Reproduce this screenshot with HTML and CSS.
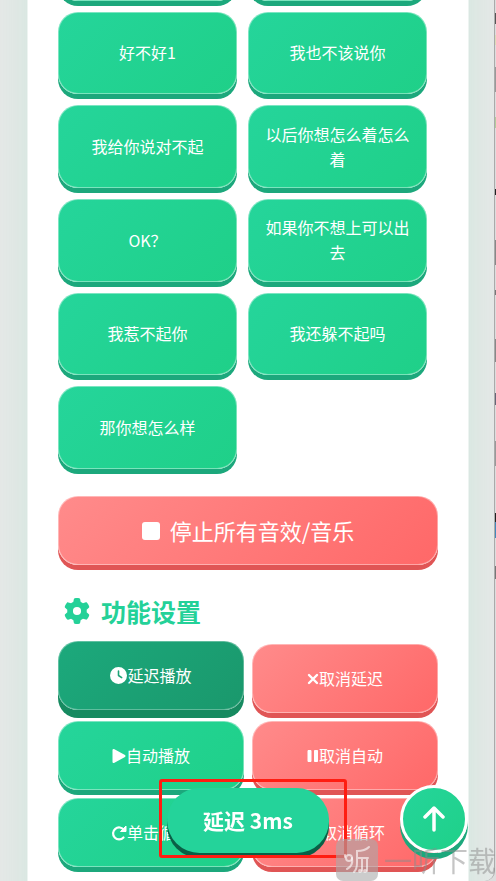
FILE: index.html
```
<!DOCTYPE html>
<html lang="zh-CN">
<head>
	<meta charset="UTF-8">
	<meta name="viewport" content="width=device-width, initial-scale=1.0">
	<title>音效盒</title>
	<link rel="stylesheet" href="styles.css">
</head>
<body>
	<div class="window">
		<main class="card">
			<div class="sound-grid">
				<button class="btn" type="button"></button>
				<button class="btn" type="button"></button>
				<button class="btn" type="button">好不好1</button>
				<button class="btn" type="button">我也不该说你</button>
				<button class="btn" type="button">我给你说对不起</button>
				<button class="btn" type="button">以后你想怎么着怎么着</button>
				<button class="btn" type="button">OK？</button>
				<button class="btn" type="button">如果你不想上可以出去</button>
				<button class="btn" type="button">我惹不起你</button>
				<button class="btn" type="button">我还躲不起吗</button>
				<button class="btn" type="button">那你想怎么样</button>
			</div>

			<button class="btn red stop" type="button">
				<svg width="18" height="18" viewBox="0 0 18 18"><rect width="18" height="18" rx="3" fill="currentColor"/></svg>
				停止所有音效/音乐
			</button>

			<h2 class="title">
				<svg width="26" height="26" viewBox="0 0 512 512"><path fill="currentColor" d="M495.9 166.6c3.2 8.7.5 18.4-6.4 24.6l-43.3 39.4c1.1 8.3 1.7 16.800 1.700 25.400s-.6 17.100-1.700 25.400l43.300 39.400c6.900 6.200 9.600 15.900 6.400 24.600c-4.400 11.900-9.700 23.300-15.800 34.300l-4.700 8.100c-6.600 11-14 21.400-22.100 31.200c-5.900 7.200-15.700 9.600-24.500 6.800l-55.700-17.700c-13.400 10.300-28.200 18.900-44 25.400l-12.500 57.100c-2 9.100-9 16.300-18.200 17.800c-13.800 2.300-28 3.500-42.500 3.500s-28.700-1.200-42.500-3.500c-9.200-1.500-16.200-8.700-18.200-17.800l-12.500-57.100c-15.800-6.500-30.600-15.100-44-25.400L83.100 425.900c-8.800 2.800-18.600.3-24.500-6.800c-8.100-9.800-15.500-20.200-22.100-31.200l-4.700-8.100c-6.100-11-11.400-22.400-15.800-34.300c-3.200-8.700-.5-18.400 6.400-24.600l43.300-39.400C64.600 273.100 64 264.600 64 256s.6-17.100 1.700-25.400L22.400 191.200c-6.900-6.200-9.600-15.900-6.400-24.600c4.400-11.900 9.700-23.300 15.800-34.300l4.700-8.100c6.600-11 14-21.400 22.100-31.200c5.900-7.200 15.700-9.600 24.500-6.800l55.700 17.700c13.400-10.300 28.200-18.900 44-25.400l12.500-57.100c2-9.100 9-16.300 18.200-17.800C227.300 1.200 241.500 0 256 0s28.700 1.200 42.500 3.500c9.200 1.500 16.200 8.700 18.200 17.800l12.500 57.100c15.800 6.500 30.600 15.100 44 25.400l55.700-17.700c8.800-2.800 18.600-.3 24.500 6.800c8.100 9.800 15.500 20.200 22.100 31.200l4.700 8.100c6.100 11 11.400 22.400 15.800 34.300zM256 336a80 80 0 1 0 0-160a80 80 0 1 0 0 160z"/></svg>
				功能设置
			</h2>

			<div class="set-grid">
				<button class="btn active" type="button">
					<svg width="17" height="17" viewBox="0 0 512 512"><path fill="currentColor" d="M256 0a256 256 0 1 1 0 512A256 256 0 1 1 256 0zM232 120V256c0 8 4 15.500 10.700 20l96 64c11 7.400 25.900 4.400 33.300-6.700s4.400-25.900-6.700-33.300L280 243.200V120c0-13.300-10.700-24-24-24s-24 10.700-24 24z"/></svg>延迟播放
				</button>
				<button class="btn red" type="button">
					<svg width="12" height="12" viewBox="0 0 12 12"><path d="M2 2l8 8M10 2l-8 8" fill="none" stroke="currentColor" stroke-width="2.400" stroke-linecap="round"/></svg>取消延迟
				</button>
				<button class="btn" type="button">
					<svg width="14" height="16" viewBox="0 0 14 16"><path d="M1.500 2v12L12.500 8z" fill="currentColor" stroke="currentColor" stroke-width="2" stroke-linejoin="round"/></svg>自动播放
				</button>
				<button class="btn red" type="button">
					<svg width="12" height="14" viewBox="0 0 12 14"><path d="M1 1.500h3v11h-3zM7.500 1.500h3v11h-3z" fill="currentColor" stroke="currentColor" stroke-linejoin="round"/></svg>取消自动
				</button>
				<button class="btn" type="button">
					<svg width="16" height="16" viewBox="0 0 16 16"><path d="M13 5A6 6 0 1 0 12.500 12.500" fill="none" stroke="currentColor" stroke-width="2.200" stroke-linecap="round"/><path d="M15 1v5.500h-5.500z" fill="currentColor" stroke="currentColor" stroke-linejoin="round"/></svg>单击循环
				</button>
				<button class="btn red" type="button">
					<svg width="16" height="16" viewBox="0 0 16 16"><path d="M4 4l8 8M12 4l-8 8" fill="none" stroke="currentColor" stroke-width="2.400" stroke-linecap="round"/></svg>取消循环
				</button>
			</div>
		</main>
	</div>

	<div class="toast">延迟 3ms</div>
	<div class="mark-box"></div>

	<button class="to-top" type="button" aria-label="返回顶部">
		<svg width="24" height="26" viewBox="0 0 24 26"><path d="M12 24V3M3 11l9-9 9 9" fill="none" stroke="currentColor" stroke-width="3.500" stroke-linecap="round" stroke-linejoin="round"/></svg>
	</button>

	<div class="watermark">
		<svg width="42" height="42" viewBox="0 0 42 42">
			<rect width="42" height="42" rx="7" fill="#aaa" fill-opacity=".6"/>
			<g fill="none" stroke="#fff" stroke-opacity=".6" stroke-width="2" stroke-linecap="round">
				<circle cx="13" cy="19" r="3"/>
				<path d="M9 16v2M16 19c1 5-1 9-5 11M33 8c-3 3-7 4-12 4v12c0 5-1 7-3 9M21 19h11M26 19v13M31 19v13"/>
				<circle cx="24" cy="32" r="1"/><circle cx="29" cy="32" r="1"/>
			</g>
		</svg>
		<span>一听下载</span>
	</div>
</body>
</html>
```

FILE: styles.css
```
* {
	box-sizing: border-box;
}
body {
	margin: 0;
	height: 100vh;
	overflow: hidden;
	padding-right: 1px;
	/* whatever is behind the window shows as a thin strip on the right */
	background: linear-gradient(#ddd 13px, #555 13px 24px, #ddd 24px 35px, #dcdcb8 35px 45px, #ddd 45px 67px, #999 67px 92px, #ddd 92px 117px, #b4cc9c 117px 128px, #ddd 128px 189px, #222 189px 195px, #ddd 195px 240px, #888 240px 265px, #ddd 265px 290px, #777 290px 295px, #ddd 295px 339px, #888 339px 362px, #ddd 362px 393px, #667 393px 405px, #ddd 405px 441px, #999 441px 466px, #ddd 466px 513px, #222 513px 522px, #48b 522px 538px, #ddd 538px 566px, #777 566px 579px, #ddd 579px);
	font-family: "Noto Sans CJK SC", "Noto Sans", sans-serif;
}
.window {
	height: 100vh;
	overflow: hidden;
	border-right: 1px solid #aaa;
	border-bottom-right-radius: 10px;
	background: #e7e8e8;
}
.card {
	display: flow-root;
	margin: -82px 25px 0 27px;
	padding: 0 30px 90px;
	border: 1px solid #edf4f1;
	border-width: 0 1px;
	background: #fff;
	box-shadow: 0 0 40px rgba(32, 232, 141, 0.12);
}

.btn {
	display: flex;
	align-items: center;
	justify-content: center;
	min-height: 69px;
	padding: 0 12px;
	border: 1px solid rgba(255, 255, 255, 0.4);
	border-radius: 20px;
	background: linear-gradient(135deg, #25d59b, #1fd088) border-box;
	box-shadow: 0 5px 0 #1ca87c;
	color: #fff;
	font-family: inherit;
	font-size: 16px;
	line-height: 25px;
	cursor: pointer;
}
.btn.red {
	background: linear-gradient(135deg, #ff8b8b, #ff6868) border-box;
	box-shadow: 0 5px 0 #e05555;
}
.btn.active {
	border-color: rgba(255, 255, 255, 0.3);
	background: linear-gradient(135deg, #1ca97c, #1a986c) border-box;
	box-shadow: 0 8px 0 #168a60;
	transform: translateY(-3px);
}

.sound-grid {
	display: grid;
	grid-template-columns: 1fr 1fr;
	grid-auto-rows: 1fr;
	gap: 11px;
	min-height: 551px;
	padding-right: 11px;
}
.stop {
	width: 100%;
	margin-top: 27px;
	gap: 10px;
	font-size: 22px;
}
.title {
	display: flex;
	align-items: center;
	gap: 11px;
	margin: 27px 0 14px;
	padding-left: 6px;
	color: #24d198;
	font-size: 25px;
	line-height: 38px;
}
.set-grid {
	display: grid;
	grid-template-columns: 1fr 1fr;
	gap: 8px;
}

/* floating parts */
.toast {
	position: fixed;
	left: 50%;
	bottom: 28px;
	transform: translateX(-50%);
	padding: 16px 36px;
	border-radius: 33px;
	background: #24d39a;
	box-shadow: 0 5px 0 #0a5f46;
	color: #fff;
	font-size: 21px;
	font-weight: bold;
	line-height: 33px;
	white-space: nowrap;
}
.mark-box {
	position: fixed;
	left: 159px;
	bottom: 23px;
	width: 188px;
	height: 79px;
	border: 3px solid #ff1d12;
	border-radius: 3px;
}
.to-top {
	position: fixed;
	right: 28px;
	bottom: 28px;
	display: flex;
	align-items: center;
	justify-content: center;
	width: 68px;
	height: 68px;
	padding: 0;
	border: 3px solid #fff;
	border-radius: 50%;
	background: linear-gradient(135deg, #25d59b, #1fd088) border-box;
	box-shadow: 0 6px 0 #1ca87c;
	color: #fff;
	cursor: pointer;
}
.watermark {
	position: fixed;
	right: 0;
	bottom: 0;
	display: flex;
	align-items: center;
	gap: 6px;
	color: rgba(140, 140, 140, 0.5);
	font-size: 28px;
	line-height: 38px;
	pointer-events: none;
}
```
